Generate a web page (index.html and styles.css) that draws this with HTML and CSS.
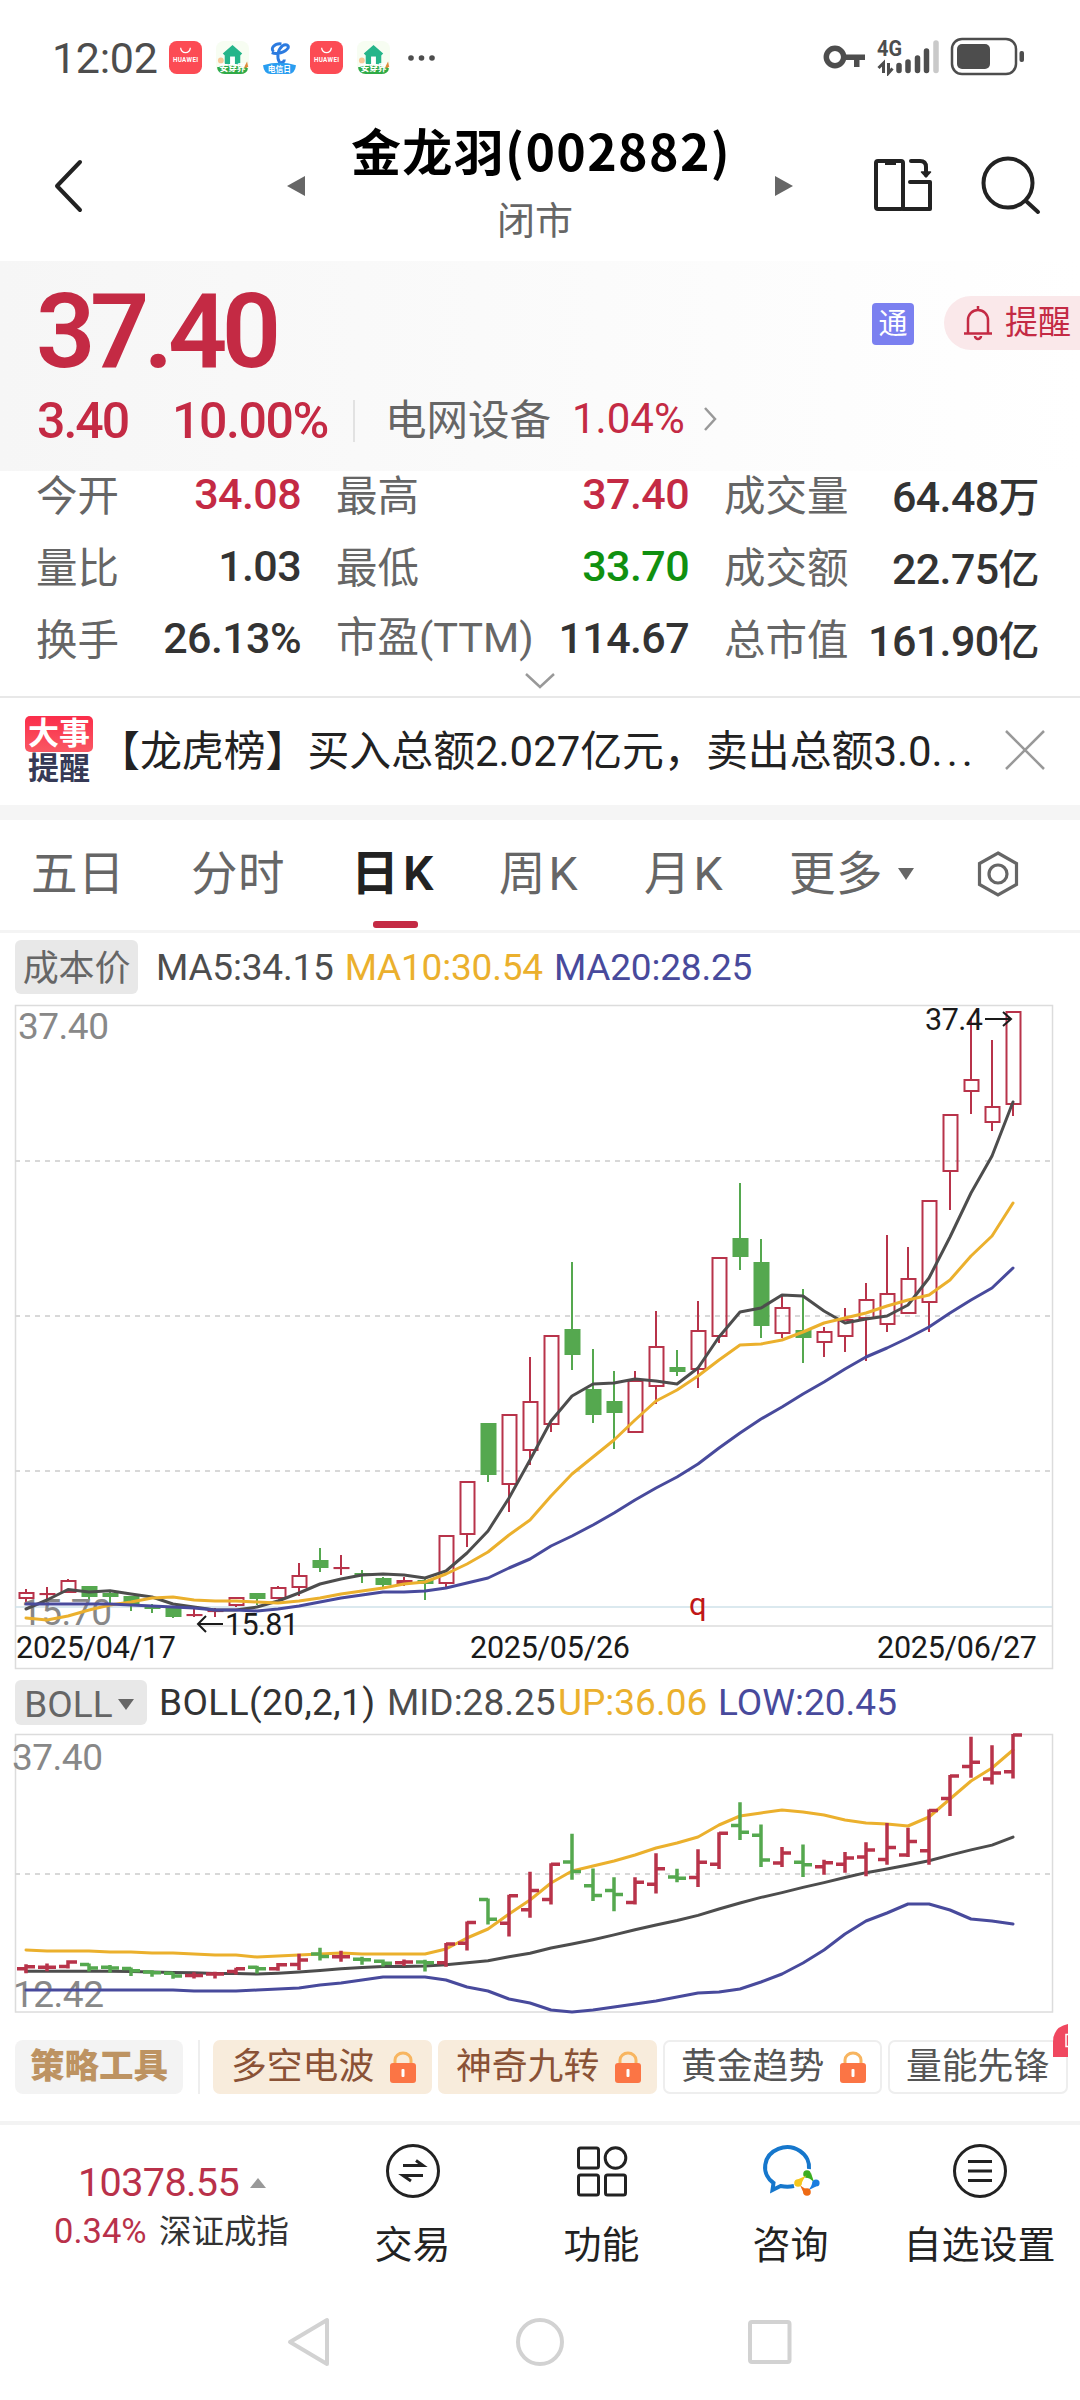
FILE: index.html
```html
<!DOCTYPE html>
<html lang="zh-CN">
<head>
    <meta charset="UTF-8">
    <meta name="viewport" content="width=device-width, initial-scale=1.0">
    <title>金龙羽(002882)</title>
    <link rel="stylesheet" href="styles.css">
</head>
<body>
    <svg class="defs">
        <symbol id="appStore" viewBox="0 0 34 34">
            <rect width="34" height="34" rx="8" fill="#fc4b54"/>
            <path d="M12 7a5 5 0 0 0 10 0" fill="none" stroke="#fff" stroke-width="1.3"/>
            <text x="17" y="22" font-size="6.5" font-weight="700" fill="#fff" text-anchor="middle" textLength="26">HUAWEI</text>
        </symbol>
        <symbol id="homeApp" viewBox="0 0 34 34">
            <rect width="34" height="34" rx="8" fill="#f7fdf2"/>
            <circle cx="5" cy="20" r="3" fill="#f8c898"/>
            <path d="M29 27l3-6 1 5-3 4z" fill="#e08a3c"/>
            <path d="M17 4l10 9-2 2v9H9v-9l-2-2z" fill="#25b58a"/>
            <rect x="14.5" y="16" width="5" height="8" fill="#fff"/>
            <path d="M1 27q16-4 32 1-1 6-8 6H9q-7 0-8-7z" fill="#2faa46"/>
            <text x="17" y="31" font-size="9" font-weight="700" fill="#fff" text-anchor="middle">安穿界</text>
        </symbol>
        <symbol id="telecomApp" viewBox="0 0 34 34">
            <path d="M9 12c5 2 14 0 17-5 1-3-3-4-6-2-5 4-6 12-3 17 3 1 5-1 5-3M19 3c-7-1-12 5-8 8" fill="none" stroke="#2c7be0" stroke-width="3"/>
            <path d="M0 25q17-5 34 0-1 9-8 9H8q-7 0-8-9z" fill="#2a9df0"/>
            <text x="17" y="32" font-size="8" font-weight="700" fill="#fff" text-anchor="middle">电信日</text>
        </symbol>
        <symbol id="lock" viewBox="0 0 28 32">
            <path d="M6 14V9a8 7 0 0 1 16 0v5" fill="none" stroke="#f8b560" stroke-width="3"/>
            <rect x="1" y="12" width="26" height="20" rx="3" fill="#fb7545"/>
            <rect x="12.5" y="18" width="3" height="8" rx="1" fill="#fff"/>
        </symbol>
    </svg>

    <div class="status-bar">
        <span class="clock">12:02</span>
        <svg class="app-icon"><use href="#appStore"/></svg>
        <svg class="app-icon"><use href="#homeApp"/></svg>
        <svg class="app-icon"><use href="#telecomApp"/></svg>
        <svg class="app-icon"><use href="#appStore"/></svg>
        <svg class="app-icon"><use href="#homeApp"/></svg>
        <svg class="dots" width="28" height="8" viewBox="0 0 28 8" fill="#4d4d4d">
            <circle cx="3" cy="4" r="2.8"/><circle cx="13.5" cy="4" r="2.8"/><circle cx="24" cy="4" r="2.8"/>
        </svg>
        <svg class="system-icons" width="204" height="40" viewBox="820 36 204 40">
            <circle cx="835" cy="57" r="8.7" fill="none" stroke="#4d4d4d" stroke-width="5.5"/>
            <path d="M845 54.500h20v5.500h-5.500v7h-5.500v-7H845z" fill="#4d4d4d"/>
            <text x="877" y="56" font-size="22.500" font-weight="700" fill="#4d4d4d" textLength="25" lengthAdjust="spacingAndGlyphs">4G</text>
            <path d="M883.500 73V63l-5 5M888.500 63v10l4-4.500" fill="none" stroke="#4d4d4d" stroke-width="3"/>
            <path d="M899 65.500v5M908 62v8.500M917.500 58v12.500M926.500 51v19.500" stroke="#4d4d4d" stroke-width="5.500" stroke-linecap="round"/>
            <path d="M936 43v27.500" stroke="#c9c9c9" stroke-width="5.500" stroke-linecap="round"/>
            <rect x="952" y="39" width="64" height="35" rx="10" fill="none" stroke="#4d4d4d" stroke-width="2.500"/>
            <rect x="957" y="44" width="33" height="25" rx="5" fill="#4d4d4d"/>
            <rect x="1019.500" y="51" width="4.500" height="11" rx="2" fill="#4d4d4d"/>
        </svg>
    </div>

    <header class="header">
        <svg class="back" width="30" height="54" viewBox="0 0 30 54" fill="none" stroke="#222" stroke-width="4" stroke-linecap="round" stroke-linejoin="round"><path d="M27 3L4 27l23 24"/></svg>
        <div class="switcher">
            <span class="prev"></span>
            <div class="title">
                <h1>金龙羽(002882)</h1>
                <p>闭市</p>
            </div>
            <span class="next"></span>
        </div>
        <svg class="head-icons" width="172" height="60" viewBox="872 157 172 60" fill="none" stroke="#222" stroke-width="4" stroke-linecap="round" stroke-linejoin="round">
            <rect x="876" y="162" width="27" height="48" rx="2"/>
            <path d="M885 163.500h11" stroke-width="5" stroke-linecap="butt"/>
            <path d="M903 210h27v-27h-20M911 162h9q6 0 6 6v8"/>
            <path d="M921.500 173h9l-4.500 5z" fill="#222" stroke-width="1.500"/>
            <circle cx="1008" cy="184" r="24.500"/>
            <path d="M1026 202l12 11"/>
        </svg>
    </header>

    <section class="quote">
        <div class="quote-top">
            <span class="price">37.40</span>
            <span class="tong">通</span>
            <div class="remind">
                <svg width="28" height="36" viewBox="0 0 28 36" fill="none" stroke="#c42a44" stroke-width="2.500">
                    <path d="M14 1v4M4 28V15a10 10 0 0 1 20 0v13M0 28.500h28M11 31a3 3 0 0 0 6 0"/>
                </svg>
                提醒
            </div>
        </div>
        <div class="quote-change">
            <span class="change">3.40</span>
            <span class="percent">10.00%</span>
            <span class="sector">电网设备</span>
            <span class="sector-percent">1.04%</span>
            <svg width="16" height="28" viewBox="0 0 16 28" fill="none" stroke="#999" stroke-width="2.500"><path d="M2 3l10 11L2 25"/></svg>
        </div>
    </section>

    <section class="stats">
        <div class="stat"><span>今开</span><b class="up">34.08</b></div>
        <div class="stat"><span>最高</span><b class="up">37.40</b></div>
        <div class="stat"><span>成交量</span><b>64.48<i>万</i></b></div>
        <div class="stat"><span>量比</span><b>1.03</b></div>
        <div class="stat"><span>最低</span><b class="down">33.70</b></div>
        <div class="stat"><span>成交额</span><b>22.75<i>亿</i></b></div>
        <div class="stat"><span>换手</span><b>26.13%</b></div>
        <div class="stat"><span class="ttm">市盈(TTM)</span><b>114.67</b></div>
        <div class="stat"><span>总市值</span><b>161.90<i>亿</i></b></div>
    </section>
    <div class="expand">
        <svg width="32" height="18" viewBox="0 0 32 18" fill="none" stroke="#999" stroke-width="2.500"><path d="M2 2l14 13L30 2"/></svg>
    </div>

    <section class="news">
        <div class="news-logo"><span>大事</span><em>提醒</em></div>
        <p>【龙虎榜】买入总额2.027亿元，卖出总额3.0<span class="more-dots">...</span></p>
        <svg width="40" height="40" viewBox="0 0 40 40" stroke="#999" stroke-width="2.500"><path d="M1 1l38 38M39 1L1 39"/></svg>
    </section>

    <nav class="tabs">
        <span>五日</span>
        <span>分时</span>
        <span class="active">日K</span>
        <span>周K</span>
        <span>月K</span>
        <span class="more">更多</span>
        <svg width="42" height="46" viewBox="0 0 42 46" fill="none" stroke="#666" stroke-width="3.200"><path d="M21 2l18.500 10.500v21L21 44 2.500 33.500v-21z"/><circle cx="21" cy="23" r="9"/></svg>
    </nav>

    <div class="legend ma-legend">
        <span class="chip">成本价</span>
        <span class="dark">MA5:34.15</span>
        <span class="yellow">MA10:30.54</span>
        <span class="blue">MA20:28.25</span>
    </div>
    <svg class="chart" id="kline" width="1080" height="668" viewBox="0 1004 1080 668"></svg>

    <div class="legend boll-legend">
        <span class="chip">BOLL</span>
        <span class="black">BOLL(20,2,1)</span>
        <span class="dark">MID:28.25</span>
        <span class="yellow">UP:36.06</span>
        <span class="blue">LOW:20.45</span>
    </div>
    <svg class="chart" id="boll" width="1080" height="286" viewBox="0 1730 1080 286"></svg>

    <section class="tools">
        <span class="tool-title">策略工具</span>
        <div class="tool-list">
            <span class="tool hot">多空电波<svg><use href="#lock"/></svg></span>
            <span class="tool hot">神奇九转<svg><use href="#lock"/></svg></span>
            <span class="tool">黄金趋势<svg><use href="#lock"/></svg></span>
            <span class="tool last">量能先锋</span>
            <svg class="badge" width="15" height="33" viewBox="0 0 15 33"><path d="M15 0Q0 3 0 18v15h15z" fill="#f04860"/><path d="M15 10.500h-2v12H15" fill="none" stroke="#fff" stroke-width="1.500"/></svg>
        </div>
    </section>

    <footer class="bottom-bar">
        <div class="index">
            <p class="index-value">10378.55</p>
            <p class="index-name"><span>0.34%</span>深证成指</p>
        </div>
        <div class="action">
            <svg width="60" height="60" viewBox="0 0 60 60" fill="none" stroke="#222" stroke-width="3">
                <circle cx="30" cy="30" r="25.500"/>
                <path d="M20 24.500h20l-7-5M40 34.500H20l8 5.500"/>
            </svg>
            交易
        </div>
        <div class="action">
            <svg width="60" height="60" viewBox="0 0 60 60" fill="none" stroke="#222" stroke-width="3">
                <rect x="6.500" y="7" width="20" height="20" rx="2"/><circle cx="43.500" cy="17" r="10.300"/>
                <rect x="6.500" y="34" width="20" height="20" rx="2"/><rect x="33.500" y="34" width="20" height="20" rx="2"/>
            </svg>
            功能
        </div>
        <div class="action">
            <svg width="60" height="60" viewBox="0 0 60 60">
                <path d="M48 28A22 20 0 1 0 12.500 42l-1 7 8-4q7 1.500 13.500 0" fill="none" stroke="#1677cc" stroke-width="4"/>
                <circle cx="46" cy="33" r="3.800" fill="#3bae20"/><path d="M44 36l6-4 3 9q-4-4-9-5z" fill="#3bae20"/>
                <circle cx="55" cy="42" r="3.600" fill="#1a7de0"/><path d="M52 39l3 6.500-8 4q4-4 5-10.500z" fill="#1a7de0"/>
                <circle cx="46" cy="51" r="3.800" fill="#ee6a14"/><path d="M49 49l-6 4-4-9q4 4 10 5z" fill="#ee6a14"/>
                <circle cx="37" cy="42" r="3.800" fill="#f5c71c"/><path d="M39.500 45.500l-3-7 9-4q-4 4-6 11z" fill="#f5c71c"/>
            </svg>
            咨询
        </div>
        <div class="action">
            <svg width="60" height="60" viewBox="0 0 60 60" fill="none" stroke="#222" stroke-width="3">
                <circle cx="30" cy="30" r="25.500"/><path d="M18 20.500h24M18 30h24M18 39.500h24"/>
            </svg>
            自选设置
        </div>
    </footer>

    <div class="system-nav">
        <svg width="46" height="50" viewBox="0 0 46 50"><path d="M41 3v44L4 25z"/></svg>
        <svg width="50" height="50" viewBox="0 0 50 50"><circle cx="25" cy="25" r="22"/></svg>
        <svg width="46" height="50" viewBox="0 0 46 50"><rect x="3" y="5" width="39.500" height="40" rx="2"/></svg>
    </div>

    <script src="chart.js"></script>
</body>
</html>
```
FILE: styles.css
```css
* {
    box-sizing: border-box;
}

body {
    margin: 0;
    width: 1080px;
    height: 2400px;
    background: #fff;
    color: #222;
    font-family: Roboto, "Noto Sans CJK SC", sans-serif;
    overflow: hidden;
}

p, h1 {
    margin: 0;
}

svg {
    display: block;
    flex-shrink: 0;
}

.defs {
    display: none;
}

/* status bar */
.status-bar {
    display: flex;
    align-items: center;
    height: 115px;
    padding: 0 56px 0 52px;
}

.clock {
    width: 117px;
    color: #4d4d4d;
    font-size: 43px;
    letter-spacing: -0.3px;
}

.app-icon {
    width: 33px;
    height: 33px;
    margin-right: 14px;
}

.dots {
    margin-left: 4px;
}

.system-icons {
    margin-left: auto;
    margin-bottom: 3px;
}

/* header */
.header {
    display: flex;
    align-items: center;
    height: 146px;
    padding: 0 36px 4px 53px;
}

.switcher {
    display: flex;
    align-items: center;
    justify-content: space-between;
    width: 506px;
    margin: 0 79px 0 204px;
}

.title {
    text-align: center;
}

.title h1 {
    padding-left: 2px;
    color: #000;
    font: 700 50px/70px "Noto Sans CJK SC", sans-serif;
    letter-spacing: 1.4px;
    white-space: nowrap;
}

.title p {
    color: #666;
    font-size: 38px;
    line-height: 74px;
    padding-right: 10px;
}

.prev, .next {
    border: 10px solid transparent;
}

.prev {
    border-left: 0;
    border-right: 18px solid #666;
}

.next {
    border-right: 0;
    border-left: 18px solid #666;
}

/* price */
.quote {
    height: 210px;
    background: linear-gradient(90deg, #f6f6f6, #fff);
}

.quote-top {
    display: flex;
    height: 134px;
    padding-left: 36px;
    color: #c42a44;
}

.price {
    width: 836px;
    font-size: 104px;
    font-weight: 600;
    line-height: 142px;
    letter-spacing: -5.5px;
}

.tong {
    width: 42px;
    height: 42px;
    margin-top: 42px;
    border-radius: 4px;
    background: #7b80f0;
    color: #fff;
    font-size: 29px;
    line-height: 42px;
    text-align: center;
}

.remind {
    display: flex;
    align-items: center;
    gap: 13px;
    width: 136px;
    height: 54px;
    margin: 35px 0 0 30px;
    padding-left: 20px;
    border-radius: 27px 0 0 27px;
    background: #fae8ea;
    font-size: 33px;
    line-height: 52px;
    white-space: nowrap;
}

.quote-change {
    display: flex;
    align-items: center;
    height: 51px;
    padding-left: 37px;
    color: #c42a44;
}

.change, .percent {
    font-size: 50px;
    font-weight: 500;
}

.change {
    width: 135px;
    letter-spacing: -2px;
}

.percent {
    width: 181px;
    letter-spacing: -1.4px;
}

.sector {
    width: 219px;
    padding-left: 30px;
    border-left: 2px solid #e2e2e2;
    color: #666;
    font-size: 41.5px;
    line-height: 42px;
}

.sector-percent {
    width: 131px;
    font-size: 42px;
}

.quote-change svg, .sector-percent {
    margin-bottom: 4px;
}

/* stats */
.stats {
    display: grid;
    grid-template-columns: 265px 353px 315px;
    grid-auto-rows: 72px;
    column-gap: 35px;
    height: 198px;
    padding-left: 36px;
    margin-top: -13px;
}

.stat {
    display: flex;
    align-items: center;
    justify-content: space-between;
    color: #666;
    font-size: 41.5px;
    white-space: nowrap;
}

.stat span {
    padding-bottom: 3px;
}

.stat b {
    color: #333;
    font-size: 43px;
    font-weight: 500;
    letter-spacing: -0.6px;
}

.stat i {
    font-size: 41px;
    font-style: normal;
}

.stat .up {
    color: #c42a44;
}

.stat .down {
    color: #109010;
}

.stat .ttm {
    margin-top: -6px;
}

.expand {
    display: flex;
    justify-content: center;
    height: 42px;
    padding-top: 16px;
    border-bottom: 2px solid #e8e8e8;
}

/* news */
.news {
    display: flex;
    align-items: center;
    height: 122px;
    padding: 0 0 3px 25px;
    border-bottom: 15px solid #f5f5f5;
}

.news-logo {
    width: 68px;
    font-size: 31px;
    font-weight: 700;
    text-align: center;
}

.news-logo span {
    display: block;
    height: 36px;
    border-radius: 5px;
    background: linear-gradient(#fb2d4a, #f95863);
    color: #fff;
    line-height: 36px;
}

.news-logo em {
    display: block;
    height: 32px;
    color: #363a56;
    font-style: normal;
    line-height: 34px;
}

.news p {
    width: 905px;
    padding: 0 0 6px 5px;
    font-size: 41.9px;
    white-space: nowrap;
}

.more-dots {
    letter-spacing: 4px;
}

.news svg {
    margin-left: 7px;
}

/* period tabs */
.tabs {
    display: flex;
    align-items: center;
    height: 113px;
    padding: 0 0 2px 31px;
    border-bottom: 3px solid #f4f4f4;
    color: #666;
    font-size: 46.5px;
    line-height: 64px;
}

.tabs span {
    width: 145px;
    letter-spacing: 0.5px;
}

.tabs span:first-child {
    width: 160px;
}

.tabs span:nth-child(2) {
    width: 160px;
}

.tabs span:nth-child(4), .tabs span:nth-child(5) {
    letter-spacing: 3px;
}

.tabs .active {
    position: relative;
    width: 148px;
    color: #222;
    font-size: 48px;
    font-weight: 600;
    letter-spacing: 4px;
}

.tabs .active::after {
    content: "";
    position: absolute;
    left: 22px;
    bottom: -22px;
    width: 45px;
    height: 7px;
    border-radius: 3px;
    background: #c42a44;
}

.tabs .more {
    display: flex;
    align-items: center;
    gap: 15px;
    width: 188px;
}

.more::after {
    content: "";
    border: 8px solid transparent;
    border-top: 12px solid #666;
    border-bottom: 0;
}

/* chart legends */
.legend {
    display: flex;
    align-items: center;
    padding-left: 15px;
    font-size: 37px;
    white-space: nowrap;
}

.ma-legend {
    height: 71px;
    padding-bottom: 3px;
    gap: 11px;
}

.boll-legend {
    height: 58px;
    padding-top: 3px;
}

.chip {
    display: flex;
    align-items: center;
    justify-content: center;
    border-radius: 6px;
    background: #e8e8e8;
    color: #666;
}

.ma-legend .chip {
    width: 123px;
    height: 54px;
    padding-bottom: 5px;
    margin-right: 7px;
    font-size: 36px;
}

.ma-legend span {
    letter-spacing: -0.2px;
}

.boll-legend .chip {
    gap: 5px;
    width: 132px;
    height: 45px;
    padding: 3px 4px 0 0;
    margin-right: 12px;
}

.boll-legend .chip::after {
    content: "";
    border: 8px solid transparent;
    border-top: 11px solid #666;
    border-bottom: 0;
}

.boll-legend .black {
    width: 228px;
    letter-spacing: 0.4px;
}

.boll-legend .dark {
    width: 171px;
}

.boll-legend .yellow {
    width: 160px;
}

.black { color: #333; }
.dark { color: #4d4d4d; }
.yellow { color: #ebb02d; }
.blue { color: #484a9c; }

/* strategy tools */
.tools {
    display: flex;
    height: 109px;
    padding: 24px 0 0 15px;
    border-bottom: 4px solid #f3f3f3;
}

.tool-title {
    width: 168px;
    height: 54px;
    margin-right: 15px;
    border-radius: 8px;
    background: #f3f3f3;
    color: #bd9362;
    font-size: 34.5px;
    font-weight: 900;
    line-height: 52px;
    text-align: center;
}

.tool-list {
    position: relative;
    display: flex;
    gap: 6px;
    width: 870px;
    height: 54px;
    padding-left: 13px;
    border-left: 2px solid #eee;
}

.tool {
    display: flex;
    align-items: center;
    flex-shrink: 0;
    gap: 15px;
    width: 219px;
    padding-left: 16px;
    border: 2px solid #eee;
    border-radius: 7px;
    color: #555;
    font-size: 35.8px;
    line-height: 48px;
}

.tool.hot {
    border-color: #f8ecdc;
    background: #f8ecdc;
    color: #8a5236;
}

.tool.last {
    width: 180px;
}

.tool svg {
    width: 28px;
    height: 32px;
}

.badge {
    position: absolute;
    top: -16px;
    right: 0;
}

/* bottom bar */
.bottom-bar {
    display: flex;
    height: 163px;
    color: #222;
    font-size: 38px;
}

.index {
    width: 318px;
    padding-top: 33px;
}

.index-value {
    display: flex;
    align-items: center;
    gap: 11px;
    padding-left: 78px;
    color: #b9314a;
    font-size: 39.5px;
    letter-spacing: -0.6px;
    line-height: 50px;
}

.index-value::after {
    content: "";
    border: 8px solid transparent;
    border-top: 0;
    border-bottom: 10px solid #999;
}

.index-name {
    padding-left: 54px;
    color: #333;
    font-size: 32.5px;
    line-height: 46px;
}

.index-name span {
    display: inline-block;
    width: 105px;
    color: #b9314a;
    font-size: 34.5px;
}

.action {
    display: flex;
    flex-direction: column;
    align-items: center;
    width: 189px;
    padding-top: 16px;
    line-height: 89px;
    white-space: nowrap;
}

.system-nav {
    display: flex;
    justify-content: space-between;
    padding: 29px 287px 0 286px;
}

.system-nav svg {
    fill: none;
    stroke: #d2d2d2;
    stroke-width: 4;
    stroke-linejoin: round;
}

/* charts */
.frame {
    fill: none;
    stroke: #dcdcdc;
    stroke-width: 1.5;
}

.grid {
    stroke: #d8d8d8;
    stroke-width: 2;
    stroke-dasharray: 5 5;
}

.line {
    fill: none;
    stroke-width: 3;
    stroke-linejoin: round;
    stroke-linecap: round;
}

.line.c-dark { stroke: #4d4d4d; }
.line.c-yellow { stroke: #ebb02d; }
.line.c-blue { stroke: #484a9c; }

.r {
    fill: none;
    stroke: #b8334a;
    stroke-width: 2;
}

.g {
    fill: #55a84f;
    stroke: #55a84f;
    stroke-width: 2;
}

.bar {
    fill: none;
    stroke-width: 3.5;
}

.axis {
    fill: #888;
    font-size: 37px;
    letter-spacing: -0.5px;
}

.note {
    fill: #1a1a1a;
    font-size: 30.5px;
}
```
FILE: chart.js
```javascript
// [body top, body bottom, high, low, colour] on the chart's own scale
const candles = [
    [1593, 1598, 1589, 1604, "r"], [1594, 1594, 1587, 1599, "r"], [1581, 1592, 1579, 1592, "r"], [1587, 1596, 1587, 1600, "g"],
    [1594, 1596, 1591, 1603, "g"], [1597, 1603, 1597, 1611, "g"], [1606, 1608, 1604, 1613, "g"], [1609, 1616, 1609, 1618, "g"],
    [1615, 1615, 1609, 1617, "r"], [1611, 1611, 1608, 1617, "r"], [1598, 1605, 1598, 1607, "r"], [1594, 1598, 1593, 1605, "g"],
    [1588, 1598, 1586, 1598, "r"], [1576, 1587, 1563, 1596, "r"], [1561, 1567, 1548, 1572, "g"], [1568, 1568, 1555, 1575, "r"],
    [1574, 1575, 1570, 1583, "g"], [1579, 1584, 1577, 1587, "g"], [1581, 1583, 1577, 1586, "r"], [1581, 1583, 1578, 1600, "g"],
    [1536, 1583, 1536, 1588, "r"], [1482, 1534, 1482, 1547, "r"], [1424, 1474, 1424, 1482, "g"], [1415, 1484, 1415, 1512, "r"],
    [1402, 1450, 1357, 1465, "r"], [1336, 1424, 1336, 1432, "r"], [1330, 1354, 1262, 1370, "g"], [1390, 1414, 1349, 1423, "g"],
    [1402, 1412, 1371, 1449, "g"], [1381, 1432, 1371, 1432, "r"], [1347, 1386, 1311, 1404, "r"], [1368, 1371, 1350, 1376, "g"],
    [1331, 1369, 1301, 1388, "r"], [1258, 1336, 1258, 1343, "r"], [1239, 1256, 1183, 1270, "g"], [1263, 1325, 1239, 1338, "g"],
    [1308, 1333, 1295, 1338, "r"], [1331, 1337, 1289, 1363, "g"], [1332, 1342, 1327, 1357, "r"], [1320, 1336, 1308, 1352, "r"],
    [1300, 1318, 1283, 1361, "r"], [1294, 1324, 1235, 1332, "r"], [1279, 1313, 1247, 1313, "r"], [1201, 1302, 1201, 1332, "r"],
    [1115, 1171, 1115, 1210, "r"], [1080, 1091, 1019, 1114, "r"], [1107, 1122, 1040, 1131, "r"], [1012, 1104, 1012, 1116, "r"]
];
const ma5 = [1609, 1600, 1589.5, 1592, 1590.7, 1594, 1597, 1604, 1607, 1610, 1610, 1607, 1601, 1593, 1584, 1579, 1575, 1574, 1575, 1578, 1571, 1553, 1531, 1498, 1460, 1421, 1396, 1384, 1383, 1379, 1381, 1384, 1368, 1337, 1312, 1308, 1295, 1296, 1311, 1323, 1319, 1316, 1305, 1278, 1237, 1193, 1156, 1102];
const ma10 = [1618, 1620, 1616, 1610, 1605, 1602, 1598, 1597, 1600, 1601, 1601, 1602, 1603, 1601, 1598, 1594, 1591, 1588, 1584, 1582, 1574, 1564, 1552, 1535, 1520, 1496, 1474, 1457, 1440, 1420, 1401, 1390, 1376, 1360, 1345, 1344, 1340, 1332, 1323, 1318, 1313, 1306, 1300, 1295, 1280, 1256, 1236, 1203];
const ma20 = [1604, 1604, 1604, 1604, 1604, 1605, 1606, 1607, 1608, 1610, 1610, 1611, 1609, 1606, 1602, 1598, 1595, 1592, 1592, 1591, 1588, 1583, 1578, 1568, 1559, 1546, 1536, 1525, 1513, 1500, 1488, 1477, 1464, 1448, 1433, 1419, 1407, 1394, 1382, 1369, 1357, 1348, 1338, 1327, 1313, 1300, 1288, 1268];
const upper = [1950, 1951, 1951, 1951, 1952, 1952, 1953, 1953, 1954, 1955, 1955, 1957, 1956, 1955, 1954, 1953, 1954, 1954, 1954, 1954, 1949, 1938, 1929, 1914, 1900, 1883, 1871, 1866, 1861, 1855, 1848, 1843, 1837, 1825, 1816, 1813, 1810, 1812, 1815, 1820, 1823, 1824, 1826, 1817, 1799, 1781, 1768, 1750];
const lower = [1990, 1990, 1990, 1990, 1990, 1990, 1990, 1990, 1991, 1991, 1991, 1990, 1989, 1988, 1985, 1983, 1980, 1977, 1977, 1977, 1980, 1987, 1991, 1999, 2003, 2010, 2012, 2010, 2007, 2004, 2001, 1997, 1993, 1992, 1989, 1982, 1974, 1963, 1950, 1934, 1921, 1913, 1904, 1904, 1910, 1919, 1921, 1924];

const xAt = i => 26 + 21 * i;
const toBoll = y => 1735 + (y - 1012) * 0.399;

function line(values, color) {
    const points = values.map((y, i) => `${xAt(i)},${y}`).join(" ");
    return `<polyline class="line c-${color}" points="${points}"/>`;
}

function gridLine(y) {
    return `<path class="grid" d="M15 ${y}H1052"/>`;
}

function text(x, y, cls, value, length) {
    return `<text x="${x}" y="${y}" class="${cls}"${length ? ` textLength="${length}"` : ""}>${value}</text>`;
}

function drawKline() {
    let out = `<rect class="frame" x="15.5" y="1005.5" width="1037" height="663"/>
        <path class="frame" d="M15 1626H1052"/><path d="M15 1607H1052" stroke="#cfe2ea" stroke-width="1.5"/>`;
    out += [1161, 1316, 1471].map(gridLine).join("");
    candles.forEach(([top, bottom, high, low, color], i) => {
        const x = xAt(i);
        out += `<path class="${color}" d="M${x} ${high}V${top}M${x} ${bottom}V${low}"/>`;
        out += `<rect class="${color}" x="${x - 6.5}" y="${top}" width="14" height="${Math.max(bottom - top, 0.1)}"/>`;
    });
    out += text(18, 1039, "axis", "37.40") + text(21, 1625, "axis", "15.70");
    out += line(ma5, "dark") + line(ma10, "yellow") + line(ma20, "blue");
    out += text(16, 1658, "note", "2025/04/17", 160);
    out += text(470, 1658, "note", "2025/05/26", 160);
    out += text(877, 1658, "note", "2025/06/27", 160);
    out += text(225, 1635, "note", "15.81", 74) + text(925, 1030, "note", "37.4", 58);
    out += `<path d="M206 1616l-8 8 8 8M198 1624h25M1003 1012l8 7-8 7M985 1019h26" fill="none" stroke="#1a1a1a" stroke-width="2"/>`;
    out += `<text x="689" y="1615" font-size="31" fill="#c01818">q</text>`;
    document.getElementById("kline").innerHTML = out;
}

function drawBoll() {
    let out = `<rect class="frame" x="15.5" y="1734.5" width="1037" height="277.5"/>` + gridLine(1874);
    out += text(12, 1770, "axis", "37.40") + text(13, 2007, "axis", "12.42");
    out += line(upper, "yellow") + line(ma20.map(toBoll), "dark") + line(lower, "blue");
    candles.forEach(([top, bottom, high, low, color], i) => {
        const x = xAt(i);
        const open = toBoll(color === "r" ? bottom : top);
        const close = toBoll(color === "r" ? top : bottom);
        out += `<path class="${color} bar" d="M${x} ${toBoll(high) - 1}V${toBoll(low) + 2}M${x - 9} ${open}H${x}M${x} ${close}H${x + 9}"/>`;
    });
    document.getElementById("boll").innerHTML = out;
}

drawKline();
drawBoll();
```
